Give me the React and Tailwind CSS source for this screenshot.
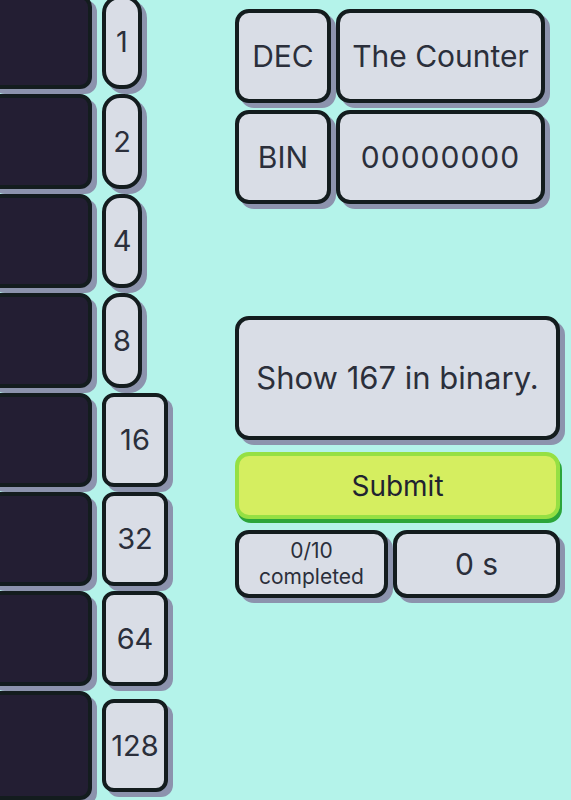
const font = { fontFamily: "Inter, 'Noto Sans', sans-serif" };

const bits = [
  { label: "1", wide: false },
  { label: "2", wide: false },
  { label: "4", wide: false },
  { label: "8", wide: false },
  { label: "16", wide: true },
  { label: "32", wide: true },
  { label: "64", wide: true },
];

const box =
  "flex items-center justify-center bg-[#d9dde6] border-[4px] border-[#131c1e] shadow-[5px_5px_0_#8c93ad] text-[#2b2f3b]";

function BitRow({ label, wide }) {
  return (
    <div className="flex h-[95px] gap-[10px]">
      <div className="w-[104px] h-full rounded-[12px] bg-[#231e33] border-[4px] border-[#131c1e] shadow-[5px_5px_0_#8c93ad]" />
      <div
        className={
          box +
          " h-full text-[29px] " +
          (wide ? "w-[66px] rounded-[12px]" : "w-[40px] rounded-[18px]")
        }
      >
        {label}
      </div>
    </div>
  );
}

export default function App() {
  return (
    <div
      className="w-[571px] h-[800px] overflow-hidden bg-[#b4f3ea] flex"
      style={font}
    >
      <div className="-ml-[12px] -mt-[5px] flex flex-col gap-[5px] shrink-0">
        {bits.map((b) => (
          <BitRow key={b.label} {...b} />
        ))}
        <div className="flex h-[110px] gap-[10px] items-center">
          <div className="w-[104px] h-full rounded-[12px] bg-[#231e33] border-[4px] border-[#131c1e] shadow-[5px_5px_0_#8c93ad]" />
          <div className={box + " h-[93px] w-[66px] rounded-[12px] text-[29px]"}>
            128
          </div>
        </div>
      </div>

      <div className="ml-[67px] mt-[9px] w-[325px] flex flex-col">
        <div className="flex flex-col gap-[7px] w-[310px]">
          <div className="flex gap-[5px] h-[94px]">
            <div className={box + " w-[96px] rounded-[14px] text-[30px]"}>DEC</div>
            <div className={box + " flex-1 rounded-[14px] text-[30px]"}>
              The Counter
            </div>
          </div>
          <div className="flex gap-[5px] h-[94px]">
            <div className={box + " w-[96px] rounded-[14px] text-[30px]"}>BIN</div>
            <div className={box + " flex-1 rounded-[14px] text-[30px] tracking-[1px]"}>
              00000000
            </div>
          </div>
        </div>

        <div className={box + " mt-[112px] h-[124px] rounded-[14px] text-[31px] text-[#1f2330]"}>
          Show 167 in binary.
        </div>

        <div className="mt-[12px] h-[67px] flex items-center justify-center rounded-[14px] bg-[#d5ee60] border-[4px] border-[#95e043] shadow-[2px_4px_0_#2ca53a] text-[28px] text-[#1f2330]">
          Submit
        </div>

        <div className="mt-[11px] flex gap-[5px] h-[68px]">
          <div className={box + " w-[153px] rounded-[14px] flex-col text-[21px] leading-[26px]"}>
            <span>0/10</span>
            <span>completed</span>
          </div>
          <div className={box + " flex-1 rounded-[14px] text-[30px]"}>0 s</div>
        </div>
      </div>
    </div>
  );
}
